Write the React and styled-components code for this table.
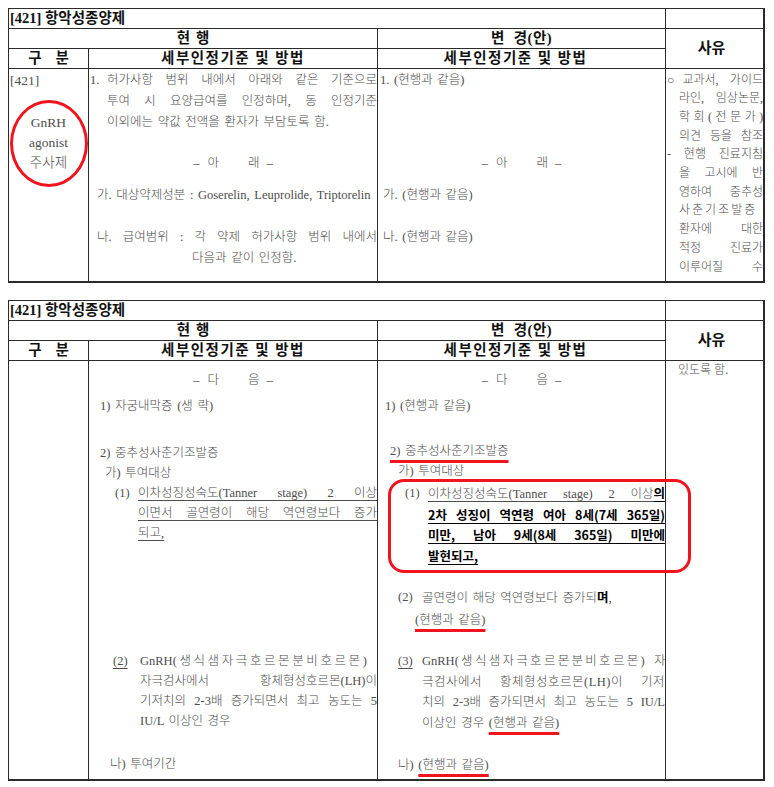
import React from 'react';
import styled, { createGlobalStyle, css } from 'styled-components';

const Global = createGlobalStyle`
  html, body { background: #fff; }
  body {
    margin: 8px;
    font-family: "Liberation Serif", "Noto Sans CJK KR", serif;
    color: #4d4d4d;
  }
  * { box-sizing: border-box; }
`;

const Sheet = styled.div`
  display: flex;
  flex-direction: column;
  align-items: flex-start;
  gap: 17px;
`;

const Table = styled.div`
  display: grid;
  grid-template-columns: 79px 288px 287px 97px;
  grid-template-rows: 19px 19px 19px ${p => p.$body}px;
  gap: 1px;
  background: #2b2b2b;
  border: 1px solid #2b2b2b;
  border-right-width: 2px;
  border-bottom-width: 2px;
`;

const Cell = styled.div`
  background: #fff;
  grid-column: ${p => p.$col};
  grid-row: ${p => p.$row};
  min-width: 0;
`;

const HeadCell = styled(Cell)`
  display: flex;
  align-items: center;
  justify-content: ${p => (p.$left ? 'flex-start' : 'center')};
  padding: 0 ${p => p.$pr || 0}px 0 ${p => p.$pl || 0}px;
  font-weight: 700;
  font-size: ${p => p.$size || 14.5}px;
  letter-spacing: ${p => p.$ls || 0}px;
  color: #111;
  line-height: 1;
  white-space: nowrap;
`;

const BodyCell = styled(Cell)`
  padding: ${p => p.$pt || 0}px 0 0 0;
  font-size: ${p => p.$size || 12.5}px;
  word-spacing: ${p => (p.$ws === undefined ? 1.5 : p.$ws)}px;
  font-weight: 300;
`;

const boldFace = css`
  font-family: "Noto Sans CJK KR", sans-serif;
  font-weight: 700;
  color: #000;
`;

const Line = styled.div`
  line-height: ${p => p.$lh || 20}px;
  margin-top: ${p => p.$mt || 0}px;
  padding-left: ${p => p.$pl || 0}px;
  letter-spacing: ${p => p.$ls || 0}px;
  white-space: ${p => (p.$nowrap ? 'nowrap' : 'normal')};
  text-align: ${p => (p.$center ? 'center' : 'left')};
  ${p =>
    p.$justify &&
    css`
      text-align: justify;
      text-align-last: justify;
    `}
  ${p =>
    p.$u &&
    css`
      text-decoration: underline;
      text-underline-offset: 3px;
      text-decoration-thickness: 1px;
    `}
  ${p => p.$bold && boldFace}
`;

const Item = styled.div`
  display: grid;
  grid-template-columns: ${p => p.$marker}px 1fr;
  margin-top: ${p => p.$mt || 0}px;
  padding-left: ${p => p.$pl || 0}px;
  line-height: ${p => p.$lh || 20}px;
`;

const Marker = styled.span`
  ${p =>
    p.$u &&
    css`
      text-decoration: underline;
      text-underline-offset: 3px;
    `}
`;

const Lines = styled.div`
  min-width: 0;
`;

const Gap = styled.span`
  display: inline-block;
  width: ${p => p.$w}px;
`;

const Tight = styled.span`
  letter-spacing: 0;
`;

const B = styled.b`
  ${boldFace}
  text-decoration: underline;
  text-underline-offset: 3px;
`;

const Strong = styled.b`
  ${boldFace}
`;

const Red = styled.span`
  text-decoration: underline;
  text-decoration-color: #f0141e;
  text-decoration-thickness: 3px;
  text-underline-offset: 5px;
  text-decoration-skip-ink: none;
`;

const Ellipse = styled.div`
  position: relative;
  margin-top: ${p => p.$mt || 0}px;
  text-align: center;
  line-height: 20px;
  &::before {
    content: '';
    position: absolute;
    left: 1px;
    right: 0;
    top: -13px;
    bottom: -14px;
    border: 3px solid #f0141e;
    border-radius: 50%;
    pointer-events: none;
  }
`;

const Highlight = styled.div`
  position: relative;
  margin-top: ${p => p.$mt || 0}px;
  &::before {
    content: '';
    position: absolute;
    left: 10px;
    right: -26px;
    top: -4px;
    bottom: -7px;
    border: 3px solid #f0141e;
    border-radius: 16px;
    pointer-events: none;
    z-index: 2;
  }
`;

const Dash = ({ a, b }) => (
  <>
    –<Gap $w={8} />
    {a}
    <Gap $w={29} />
    {b}
    <Gap $w={7} />–
  </>
);

function Header() {
  return (
    <>
      <HeadCell $col="1 / 4" $row="1" $left $pl={1}>
        [421] 항악성종양제
      </HeadCell>
      <HeadCell $col="4" $row="1" />
      <HeadCell $col="1 / 3" $row="2">
        현<Gap $w={6} />행
      </HeadCell>
      <HeadCell $col="3" $row="2" $ls={0.5}>
        변<Gap $w={9} />경(안)
      </HeadCell>
      <HeadCell $col="4" $row="2 / 4" $size={15} $pr={6}>
        사유
      </HeadCell>
      <HeadCell $col="1" $row="3">
        구<Gap $w={14} />분
      </HeadCell>
      <HeadCell $col="2" $row="3" $ls={1.5}>
        세부인정기준 및 방법
      </HeadCell>
      <HeadCell $col="3" $row="3" $ls={1.5} $pr={12}>
        세부인정기준 및 방법
      </HeadCell>
    </>
  );
}

const reasons1 = [
  { t: '○교과서, 가이드', pl: 1 },
  { t: '라인, 임상논문,', pl: 13 },
  { t: '학회(전문가)', pl: 13, ls: 3.5 },
  { t: '의견 등을 참조', pl: 13 },
  { t: '- 현행 진료지침', pl: 1 },
  { t: '을 고시에 반', pl: 13 },
  { t: '영하여 중추성', pl: 13 },
  { t: '사춘기조발증', pl: 13, ls: 2 },
  { t: '환자에 대한', pl: 13 },
  { t: '적정 진료가', pl: 13 },
  { t: '이루어질 수', pl: 13 },
];

function TableOne() {
  return (
    <Table $body={212}>
      <Header />
      <BodyCell $col="1" $row="4" $pt={1} $size={13.5}>
        <Line $lh={21} $pl={1}>[421]</Line>
        <Ellipse $mt={22}>
          <div>GnRH</div>
          <div>agonist</div>
          <div>주사제</div>
        </Ellipse>
      </BodyCell>
      <BodyCell $col="2" $row="4" $pt={1}>
        <Item $marker={17} $pl={1} $lh={21}>
          <Marker>1.</Marker>
          <Lines>
            <Line $lh={21} $justify>허가사항 범위 내에서 아래와 같은 기준으로</Line>
            <Line $lh={21} $justify>투여 시 요양급여를 인정하며, 동 인정기준</Line>
            <Line $lh={21}>이외에는 약값 전액을 환자가 부담토록 함.</Line>
          </Lines>
        </Item>
        <Line $lh={21} $mt={20} $center>
          <Dash a="아" b="래" />
        </Line>
        <Line $lh={21} $mt={11} $pl={8} $nowrap>
          가. 대상약제성분 : Goserelin, Leuprolide, Triptorelin
        </Line>
        <Line $lh={21} $mt={21} $pl={8} $justify>
          나. 급여범위 : 각 약제 허가사항 범위 내에서
        </Line>
        <Line $lh={21} $pl={103}>다음과 같이 인정함.</Line>
      </BodyCell>
      <BodyCell $col="3" $row="4" $pt={1}>
        <Line $lh={21} $pl={2}>1. (현행과 같음)</Line>
        <Line $lh={21} $mt={62} $center>
          <Dash a="아" b="래" />
        </Line>
        <Line $lh={21} $mt={11} $pl={5}>가. (현행과 같음)</Line>
        <Line $lh={21} $mt={21} $pl={5}>나. (현행과 같음)</Line>
      </BodyCell>
      <BodyCell $col="4" $row="4" $pt={1.5} $size={12} $ws={0}>
        {reasons1.map(r => (
          <Line key={r.t} $lh={18.7} $pl={r.pl} $ls={r.ls} $justify $nowrap>
            {r.t}
          </Line>
        ))}
      </BodyCell>
    </Table>
  );
}

function TableTwo() {
  return (
    <Table $body={418}>
      <Header />
      <BodyCell $col="1" $row="4" />
      <BodyCell $col="2" $row="4" $pt={9}>
        <Line $center>
          <Dash a="다" b="음" />
        </Line>
        <Line $mt={6} $pl={11}>1) 자궁내막증 (생 략)</Line>
        <Line $mt={27} $pl={11}>2) 중추성사춘기조발증</Line>
        <Line $pl={16}>가) 투여대상</Line>
        <Item $marker={23} $pl={26}>
          <Marker>(1)</Marker>
          <Lines>
            <Line $u $justify>이차성징성숙도(Tanner stage) 2 이상</Line>
            <Line $u $justify>이면서 골연령이 해당 역연령보다 증가</Line>
            <Line $u>되고,</Line>
          </Lines>
        </Item>
        <Item $marker={27} $pl={24} $mt={108}>
          <Marker $u>(2)</Marker>
          <Lines>
            <Line $justify $ls={2.6} $nowrap>
              <Tight>GnRH</Tight>(생식샘자극호르몬분비호르몬)
            </Line>
            <Line $justify>자극검사에서 황체형성호르몬(LH)이</Line>
            <Line $justify>기저치의 2-3배 증가되면서 최고 농도는 5</Line>
            <Line>IU/L 이상인 경우</Line>
          </Lines>
        </Item>
        <Line $mt={23} $pl={21}>나) 투여기간</Line>
      </BodyCell>
      <BodyCell $col="3" $row="4" $pt={9}>
        <Line $center>
          <Dash a="다" b="음" />
        </Line>
        <Line $mt={6} $pl={7}>1) (현행과 같음)</Line>
        <Line $mt={25} $pl={12}>
          <Red>2) 중추성사춘기조발증</Red>
        </Line>
        <Line $pl={20}>가) 투여대상</Line>
        <Highlight $mt={2}>
          <Item $marker={23} $pl={27} $lh={20.5}>
            <Marker>(1)</Marker>
            <Lines>
              <Line $lh={20.5} $u $justify>
                이차성징성숙도(Tanner stage) 2 이상<B>의</B>
              </Line>
              <Line $lh={20.5} $u $bold $justify>2차 성징이 역연령 여아 8세(7세 365일)</Line>
              <Line $lh={20.5} $u $bold $justify>미만, 남아 9세(8세 365일) 미만에</Line>
              <Line $lh={20.5} $u $bold>발현되고,</Line>
            </Lines>
          </Item>
        </Highlight>
        <Item $marker={24} $pl={20} $mt={21}>
          <Marker>(2)</Marker>
          <Lines>
            <Line>
              골연령이 해당 역연령보다 증가되<Strong>며</Strong>,
            </Line>
          </Lines>
        </Item>
        <Line $mt={2} $pl={37}>
          <Red>(현행과 같음)</Red>
        </Line>
        <Item $marker={24} $pl={20} $mt={21} $lh={20.5}>
          <Marker $u>(3)</Marker>
          <Lines>
            <Line $lh={20.5} $justify $ls={2.3} $nowrap>
              <Tight>GnRH</Tight>(생식샘자극호르몬분비호르몬) 자
            </Line>
            <Line $lh={20.5} $justify $ls={0.5}>극검사에서 황체형성호르몬(LH)이 기저</Line>
            <Line $lh={20.5} $justify>치의 2-3배 증가되면서 최고 농도는 5 IU/L</Line>
            <Line $lh={20.5}>
              이상인 경우 <Red>(현행과 같음)</Red>
            </Line>
          </Lines>
        </Item>
        <Line $mt={22} $pl={20}>
          나) <Red>(현행과 같음)</Red>
        </Line>
      </BodyCell>
      <BodyCell $col="4" $row="4" $size={12} $ws={0}>
        <Line $lh={18} $pl={12}>있도록 함.</Line>
      </BodyCell>
    </Table>
  );
}

export default function App() {
  return (
    <>
      <Global />
      <Sheet>
        <TableOne />
        <TableTwo />
      </Sheet>
    </>
  );
}
